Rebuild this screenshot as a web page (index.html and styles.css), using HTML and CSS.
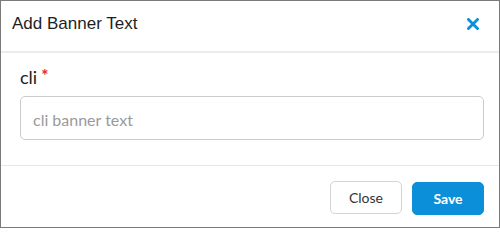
FILE: index.html
```html
<!DOCTYPE html>
<html>
<head>
<meta charset="utf-8">
<link rel="stylesheet" href="styles.css">
</head>
<body>
<div class="modal">
  <div class="modal-header">
    <h1 class="modal-title">Add Banner Text</h1>
    <button class="modal-close" aria-label="Close">
      <svg width="12" height="12" viewBox="0 0 12 12"><path d="M1.5 1.5 L10.5 10.5 M10.5 1.5 L1.5 10.5" stroke="#0b8fd8" stroke-width="2.8" stroke-linecap="square" fill="none"/></svg>
    </button>
  </div>
  <div class="modal-body">
    <label class="field-label">cli<span class="req">*</span></label>
    <input class="field-input" type="text" placeholder="cli banner text">
  </div>
  <div class="modal-footer">
    <button class="btn btn-default">Close</button>
    <button class="btn btn-primary">Save</button>
  </div>
</div>
</body>
</html>
```
FILE: styles.css
```css
* { box-sizing: border-box; }
html, body { margin: 0; padding: 0; background: #fff; }
.modal {
  width: 500px;
  height: 228px;
  border: 1px solid #7a7a7a;
  display: flex;
  flex-direction: column;
  font-family: Lato, "Open Sans", sans-serif;
}
.modal-header {
  height: 52px;
  border-bottom: 2px solid #ececec;
  display: flex;
  align-items: flex-start;
  justify-content: space-between;
  padding: 13px 20px 0 11px;
}
.modal-title {
  margin: 0;
  font-family: "Liberation Sans", Arial, sans-serif;
  font-weight: normal;
  font-size: 17px;
  line-height: 20px;
  color: #1e1e1e;
}
.modal-close {
  border: 0;
  background: none;
  padding: 0;
  margin-top: 4px;
  width: 12px;
  height: 12px;
  display: flex;
}
.modal-body {
  padding: 13px 15px 0 19px;
  height: 113px;
  border-bottom: 1px solid #e4e7eb;
  display: flex;
  flex-direction: column;
}
.field-label {
  font-size: 18px;
  line-height: 22px;
  height: 22px;
  color: #222;
}
.req {
  color: #e8262d;
  font-size: 17px;
  font-weight: bold;
  line-height: 0;
  margin-left: 4px;
  vertical-align: 2px;
}
.field-input {
  margin-top: 8px;
  height: 44px;
  width: 100%;
  border: 1px solid #cbcbcb;
  border-radius: 5px;
  padding: 3px 12px 0;
  font-family: Lato, sans-serif;
  font-size: 16px;
  color: #333;
  outline: none;
}
.field-input::placeholder { color: #9a9a9a; }
.modal-footer {
  flex: 1;
  display: flex;
  justify-content: flex-end;
  align-items: flex-start;
  gap: 10px;
  padding: 15px 15px 0 0;
}
.btn {
  width: 72px;
  height: 33px;
  border-radius: 5px;
  font-family: Lato, sans-serif;
  font-size: 14px;
  padding: 0;
  cursor: pointer;
}
.btn-default {
  background: #fff;
  border: 1px solid #d4d4d4;
  color: #333;
}
.btn-primary {
  margin-top: 1px;
  background: #0b8fd8;
  border: 1px solid #0b8fd8;
  color: #fff;
  font-weight: bold;
}
```
